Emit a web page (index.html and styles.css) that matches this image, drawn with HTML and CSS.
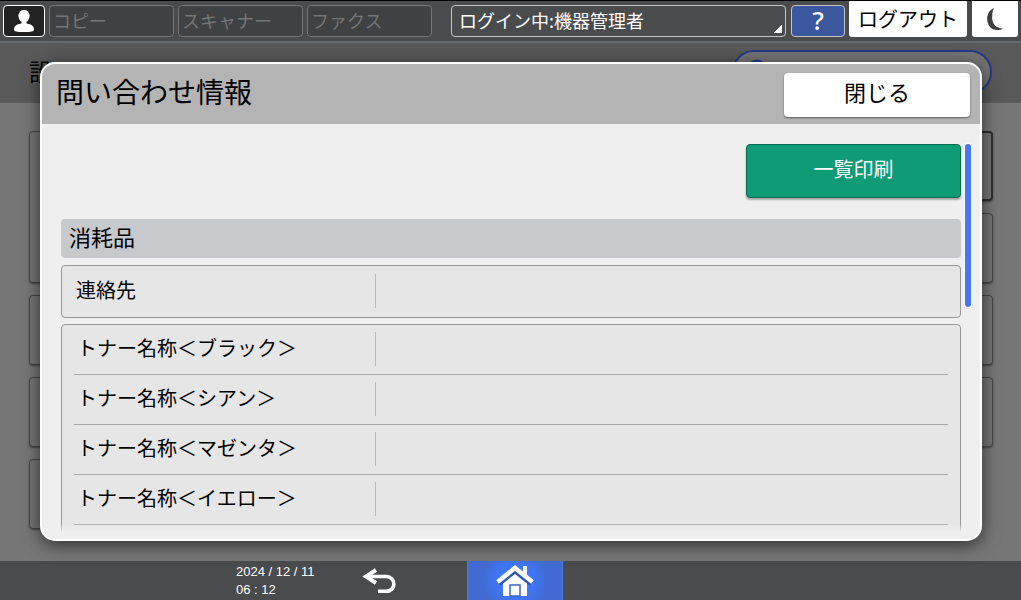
FILE: index.html
```html
<!DOCTYPE html>
<html lang="ja">
<head>
    <meta charset="UTF-8">
    <meta name="viewport" content="width=device-width, initial-scale=1.0">
    <title>問い合わせ情報</title>
    <link rel="stylesheet" href="styles.css">
</head>
<body>
    <header class="topbar">
        <button class="top-btn user" aria-label="ユーザー">
            <svg width="22" height="24" viewBox="0 0 22 24">
                <ellipse cx="11" cy="7" rx="5.6" ry="6.2" fill="#fff"/>
                <path d="M8.500 11h5v3.500c4 .6 7.500 2 7.500 6.200 0 1.600-3 2.300-10 2.300S1 22.300 1 20.700c0-4.200 3.500-5.600 7.500-6.200z" fill="#fff"/>
            </svg>
        </button>
        <button class="top-btn app" disabled>コピー</button>
        <button class="top-btn app" disabled>スキャナー</button>
        <button class="top-btn app" disabled>ファクス</button>
        <select class="top-btn login" aria-label="ログイン状態">
            <option>ログイン中:機器管理者</option>
        </select>
        <button class="top-btn help">?</button>
        <button class="white-btn logout">ログアウト</button>
        <button class="white-btn sleep" aria-label="スリープ">
            <svg width="18" height="24" viewBox="0 0 18 24">
                <path d="M8 1C3 3 1 8 1.200 12.500 1.500 19 6 23 11 23c2.500 0 4.500-.6 6-1.600C10 21.500 6.500 17 6.200 11.500 6 7.500 6.500 4 8 1z" fill="#3d3e3f"/>
            </svg>
        </button>
    </header>

    <main class="stage">
        <div class="page-head">
            <h1>設</h1>
            <div class="search">
                <svg width="24" height="24" viewBox="0 0 24 24">
                    <circle cx="9" cy="11" r="8" fill="none" stroke="#213b86" stroke-width="3"/>
                    <path d="M15 17l6 6" stroke="#213b86" stroke-width="3"/>
                </svg>
            </div>
        </div>
        <div class="tiles">
            <div class="tile tall"></div>
            <div class="tile current"></div>
            <div class="tile"></div>
            <div class="tile"></div>
            <div class="tile"></div>
            <div class="tile"></div>
            <div class="tile"></div>
            <div class="tile"></div>
        </div>

        <section class="dialog" role="dialog" aria-labelledby="dialogTitle">
            <div class="dialog-head">
                <h2 id="dialogTitle">問い合わせ情報</h2>
                <button class="close">閉じる</button>
            </div>
            <div class="dialog-body">
                <div class="list">
                    <button class="print">一覧印刷</button>
                    <h3>消耗品</h3>
                    <div class="card single">
                        <table>
                            <tr><th scope="row">連絡先</th><td></td></tr>
                        </table>
                    </div>
                    <div class="card multi">
                        <table>
                            <tr><th scope="row">トナー名称＜ブラック＞</th><td></td></tr>
                            <tr><th scope="row">トナー名称＜シアン＞</th><td></td></tr>
                            <tr><th scope="row">トナー名称＜マゼンタ＞</th><td></td></tr>
                            <tr><th scope="row">トナー名称＜イエロー＞</th><td></td></tr>
                        </table>
                    </div>
                </div>
                <div class="scroll-thumb"></div>
            </div>
        </section>
    </main>

    <footer class="bottombar">
        <div class="clock">
            <div>2024 / 12 / 11</div>
            <div>06 : 12</div>
        </div>
        <button class="back" aria-label="戻る">
            <svg width="34" height="26" viewBox="0 0 34 26">
                <path d="M5 8.500H24.500a7 7 0 0 1 0 14.800H16" fill="none" stroke="#fff" stroke-width="3.600"/>
                <path d="M14 2L4 8.500 14 15" fill="none" stroke="#fff" stroke-width="4"/>
            </svg>
        </button>
        <button class="home" aria-label="ホーム">
            <svg width="40" height="32" viewBox="0 0 40 32">
                <path d="M8 17L20 6l12 11v14H8z" fill="#fff"/>
                <path d="M3 18L20 4.500 37 18" fill="none" stroke="#2f55b5" stroke-width="7"/>
                <path d="M28 1h4v12l-4-4z" fill="#fff"/>
                <path d="M2.500 17L20 3l17.500 14" fill="none" stroke="#fff" stroke-width="4.500"/>
                <path d="M15 31V20h10v11z" fill="#fff" stroke="#3e66c4" stroke-width="1.500"/>
            </svg>
        </button>
    </footer>
</body>
</html>
```

FILE: styles.css
```css
* {
    box-sizing: border-box;
}
body {
    font-family: "Noto Sans CJK JP", sans-serif;
    margin: 0;
    display: flex;
    flex-direction: column;
    height: 100vh;
    overflow: hidden;
    background-color: #777;
    color: #000;
}
button, select {
    font-family: inherit;
    margin: 0;
    padding: 0;
    cursor: pointer;
}
h1, h2, h3 {
    margin: 0;
    font-weight: normal;
}
svg {
    display: block;
}

/* top bar */
.topbar {
    display: flex;
    align-items: flex-end;
    gap: 4px;
    padding: 0 3px 4px;
    background-color: #4a4b4d;
    border-top: 1px solid #000;
    border-bottom: 2px solid #6a6b6c;
}
.top-btn {
    height: 32px;
    border: 1px solid #c4c4c4;
    border-radius: 4px;
    background-color: #4a4b4d;
    color: #fff;
    font-size: 18px;
    line-height: 28px;
}
.user {
    width: 42px;
    background-color: #222;
    border-color: #fff;
    display: flex;
    align-items: center;
    justify-content: center;
}
.app {
    width: 125px;
    padding: 0 0 4px 3px;
    text-align: left;
    background-color: #404142;
    border-color: #757575;
    color: #757575;
}
.login {
    flex: 1;
    min-width: 0;
    margin: 0 1px 0 15px;
    padding: 0 0 2px 7px;
    appearance: none;
    background: linear-gradient(135deg, transparent 50%, #fff 50%) right 3px bottom 3px / 8px 8px no-repeat #4a4b4d;
}
.help {
    width: 54px;
    padding-bottom: 2px;
    background-color: #3b579d;
    font-family: "Noto Sans", sans-serif;
    font-size: 26px;
    font-weight: 500;
}
.white-btn {
    height: 36px;
    border: none;
    border-radius: 0 0 3px 3px;
    background-color: #fff;
    color: #000;
    font-size: 20px;
    line-height: 36px;
}
.logout {
    width: 118px;
    margin-right: 1px;
}
.sleep {
    width: 46px;
    display: flex;
    align-items: center;
    justify-content: center;
}

/* settings page behind the dialog */
.stage {
    flex: 1;
    min-height: 0;
    position: relative;
}
.page-head {
    display: flex;
    align-items: flex-start;
    justify-content: space-between;
    height: 60px;
    padding: 7px 29px 0;
    background-color: #595959;
}
.page-head h1 {
    font-size: 24px;
    line-height: 42px;
}
.search {
    width: 260px;
    height: 44px;
    padding: 6px 14px;
    border: 2px solid #213b86;
    border-radius: 22px;
    background-color: #747474;
}
.tiles {
    display: grid;
    grid-template-columns: 1fr 1fr;
    grid-auto-rows: 70px;
    gap: 12px;
    padding: 28px 28px 0 29px;
}
.tile {
    border: 1px solid #474747;
    border-radius: 4px;
    background-color: #757575;
    box-shadow: 0 1px 2px rgba(0, 0, 0, 0.4);
}
.tile.tall {
    grid-row: span 2;
}
.tile.current {
    border: 2px solid #303030;
}

/* dialog */
.dialog {
    position: absolute;
    top: 19px;
    right: 39px;
    bottom: 20px;
    left: 40px;
    display: flex;
    flex-direction: column;
    padding-bottom: 6px;
    border: 2px solid #fff;
    border-radius: 15px;
    background-color: #efefef;
    box-shadow: 0 4px 18px rgba(0, 0, 0, 0.6);
    overflow: hidden;
}
.dialog-head {
    display: flex;
    align-items: center;
    justify-content: space-between;
    flex-shrink: 0;
    height: 60px;
    padding: 2px 10px 0 14px;
    background-color: #b4b4b4;
}
.dialog-head h2 {
    padding-bottom: 8px;
    font-size: 28px;
    line-height: 48px;
}
.close {
    width: 186px;
    height: 44px;
    padding-bottom: 8px;
    border: none;
    border-radius: 4px;
    background-color: #fff;
    color: #000;
    font-size: 22px;
    line-height: 32px;
    box-shadow: 0 1px 2px rgba(0, 0, 0, 0.5);
}
.dialog-body {
    display: flex;
    align-items: flex-start;
    gap: 4px;
    flex: 1;
    min-height: 0;
    padding: 20px 9px 0 19px;
    overflow: hidden;
    position: relative;
}
.dialog-body::after {
    content: "";
    position: absolute;
    right: 0;
    bottom: 0;
    left: 0;
    height: 10px;
    background: linear-gradient(rgba(239, 239, 239, 0), #efefef);
}
.list {
    flex: 1;
    display: flex;
    flex-direction: column;
}
.print {
    align-self: flex-end;
    width: 215px;
    height: 54px;
    margin-bottom: 21px;
    padding-bottom: 4px;
    border: 1px solid #0a6b50;
    border-radius: 4px;
    background-color: #109b77;
    color: #fff;
    font-size: 20px;
    line-height: 48px;
    box-shadow: 0 2px 2px rgba(0, 0, 0, 0.3);
}
.list h3 {
    height: 39px;
    margin-bottom: 7px;
    padding-left: 8px;
    border-radius: 4px;
    background-color: #c8c9cc;
    font-size: 22px;
    line-height: 34px;
}
.card {
    padding: 0 12px;
    border: 1px solid #979797;
    border-radius: 4px;
    background-color: #e6e6e6;
}
.card.single {
    height: 53px;
    margin-bottom: 6px;
}
.card.multi {
    padding-bottom: 50px;
}
table {
    width: 100%;
    border-collapse: collapse;
    table-layout: fixed;
}
th, td {
    height: 50px;
    padding: 0;
    font-size: 20px;
    font-weight: normal;
    text-align: left;
}
th {
    width: 301px;
    padding: 0 0 2px 3px;
    line-height: 30px;
}
.single th {
    padding-left: 2px;
}
.multi tr {
    border-bottom: 1px solid #a8a8a8;
}
.multi tr:first-child th,
.multi tr:first-child td {
    height: 49px;
}
td::before {
    content: "";
    display: block;
    width: 1px;
    height: 34px;
    background-color: #b8b8b8;
}
.scroll-thumb {
    width: 6px;
    height: 163px;
    border-radius: 3px;
    background-color: #4777f5;
    box-shadow: 0 0 0 1px #f8f8f8;
}

/* bottom bar */
.bottombar {
    display: flex;
    align-items: center;
    height: 39px;
    padding-left: 236px;
    background-color: #4a4b4d;
}
.clock {
    width: 126px;
    color: #fff;
    font-family: "Liberation Sans", sans-serif;
    font-size: 13px;
    line-height: 18px;
}
.back {
    width: 34px;
    margin-right: 71px;
    border: none;
    background: none;
}
.home {
    display: flex;
    align-items: center;
    justify-content: center;
    width: 96px;
    height: 39px;
    border: 1px solid #4f7ae0;
    border-width: 0 1px;
    background: radial-gradient(circle at center, #3f78ff 15px, #416bd2 32px);
}
```
